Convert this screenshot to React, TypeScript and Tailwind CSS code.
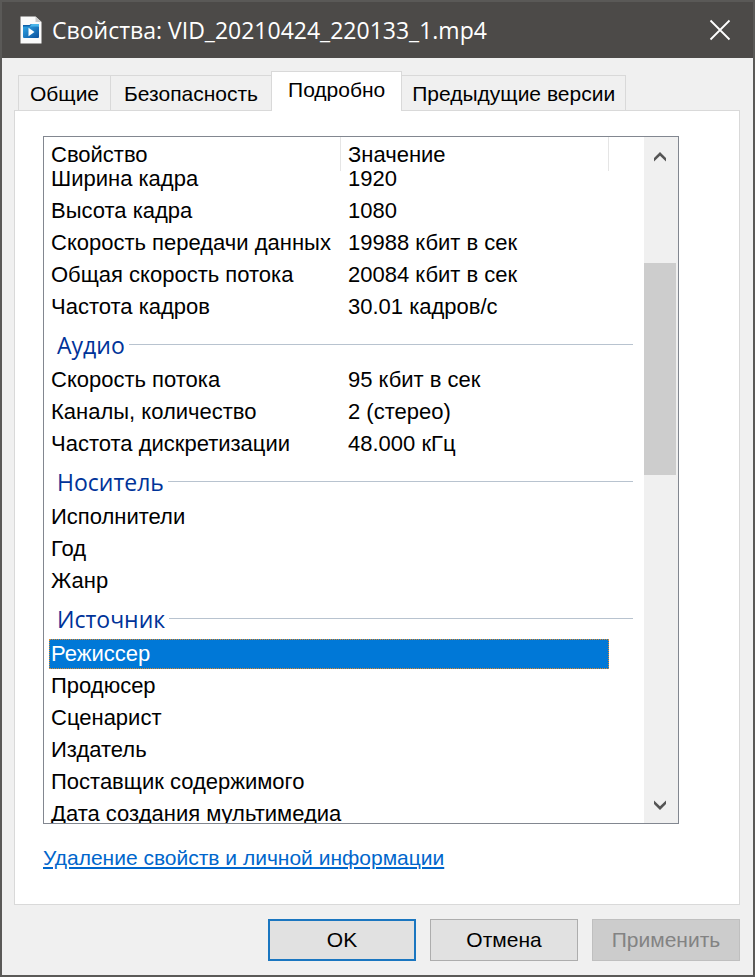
import React from 'react';

interface Row {
  name: string;
  value?: string;
}

interface Group {
  title?: string;
  rows: Row[];
}

const TABS = ['Общие', 'Безопасность', 'Подробно', 'Предыдущие версии'];
const ACTIVE_TAB = 'Подробно';
const SELECTED_ROW = 'Режиссер';

const GROUPS: Group[] = [
  {
    rows: [
      { name: 'Ширина кадра', value: '1920' },
      { name: 'Высота кадра', value: '1080' },
      { name: 'Скорость передачи данных', value: '19988 кбит в сек' },
      { name: 'Общая скорость потока', value: '20084 кбит в сек' },
      { name: 'Частота кадров', value: '30.01 кадров/с' },
    ],
  },
  {
    title: 'Аудио',
    rows: [
      { name: 'Скорость потока', value: '95 кбит в сек' },
      { name: 'Каналы, количество', value: '2 (стерео)' },
      { name: 'Частота дискретизации', value: '48.000 кГц' },
    ],
  },
  {
    title: 'Носитель',
    rows: [{ name: 'Исполнители' }, { name: 'Год' }, { name: 'Жанр' }],
  },
  {
    title: 'Источник',
    rows: [
      { name: 'Режиссер' },
      { name: 'Продюсер' },
      { name: 'Сценарист' },
      { name: 'Издатель' },
      { name: 'Поставщик содержимого' },
      { name: 'Дата создания мультимедиа' },
    ],
  },
];

const FileIcon: React.FC = () => (
  <svg width="22" height="28" viewBox="0 0 22 28" aria-hidden="true">
    <defs>
      <linearGradient id="clip" x1="0" y1="0" x2="1" y2="1">
        <stop offset="0" stopColor="#2fa4e4" />
        <stop offset="1" stopColor="#0b4f9c" />
      </linearGradient>
    </defs>
    <path d="M0.5 0.5H15.5L21.5 6V27.5H0.5Z" fill="#fafafa" />
    <path d="M15.5 0.5V6H21.5Z" fill="#c9c9c9" />
    <path d="M3 9H9.5L11 8H19V12H3Z" fill="#0d5fa8" />
    <path d="M11.5 8H19V11H9.5Z" fill="#49b5ea" />
    <rect x="3" y="10.5" width="16" height="11.5" rx="1" fill="url(#clip)" />
    <path d="M8.5 11.8V20.2L14.5 16Z" fill="#fff" />
  </svg>
);

const TitleBar: React.FC = () => (
  <header className="flex h-14 flex-shrink-0 items-center bg-[#4c4a48] pl-[18px] pr-[21px] text-white">
    <FileIcon />
    <h1 className="ml-[10px] flex-1 truncate font-['Open_Sans','Noto_Sans',sans-serif] text-[23px] leading-8">
      Свойства: VID_20210424_220133_1.mp4
    </h1>
    <button type="button" aria-label="Закрыть" className="flex h-6 w-6 items-center justify-center">
      <svg width="22" height="22" viewBox="0 0 22 22" fill="none" stroke="#fff" strokeWidth="1.8">
        <path d="M1.5 1.5L20.5 20.5M20.5 1.5L1.5 20.5" />
      </svg>
    </button>
  </header>
);

const Tabs: React.FC = () => (
  <div role="tablist" className="flex h-[52px] flex-shrink-0 items-end pl-1">
    {TABS.map((tab, i) =>
      tab === ACTIVE_TAB ? (
        <button
          key={tab}
          type="button"
          role="tab"
          aria-selected="true"
          className="relative -mb-px h-10 border border-b-0 border-[#d9d9d9] bg-white px-4 pb-1"
        >
          {tab}
        </button>
      ) : (
        <button
          key={tab}
          type="button"
          role="tab"
          aria-selected="false"
          className={`h-[35px] border-t border-[#d9d9d9] pt-[2px] ${i === 0 ? 'border-l border-r px-[11px]' : ''} ${
            i === 1 ? 'px-[13px]' : ''
          } ${i === 3 ? 'border-r px-[10px]' : ''}`}
        >
          {tab}
        </button>
      )
    )}
  </div>
);

const PropertyTable: React.FC = () => (
  <table className="w-full table-fixed border-collapse text-left text-[22px]">
    <colgroup>
      <col className="w-1/2" />
      <col />
      <col className="w-6" />
    </colgroup>
    <thead>
      <tr className="h-[26px] align-top">
        <th className="p-0 font-normal">
          <div className="-mb-2 flex h-[34px] items-center border-r border-[#e5e5e5] pl-[2px] pt-[2px]">Свойство</div>
        </th>
        <th className="p-0 font-normal">
          <div className="-mb-2 flex h-[34px] items-center border-r border-[#e5e5e5] pl-[7px] pt-[2px]">Значение</div>
        </th>
        <td />
      </tr>
    </thead>
    {GROUPS.map((group, i) => (
      <tbody key={i}>
        {group.title && (
          <tr>
            <th colSpan={3} className="p-0 font-normal">
              <div className="flex h-[41px] items-center gap-1 pl-2 pt-px">
                <span className="pt-[2px] font-['Open_Sans','Noto_Sans',sans-serif] text-[23px] leading-8 text-[#003399]">
                  {group.title}
                </span>
                <span className="h-px flex-1 bg-[#b8c3cf]" />
              </div>
            </th>
          </tr>
        )}
        {group.rows.map((row) => {
          const selected = row.name === SELECTED_ROW;
          return (
            <tr key={row.name} aria-selected={selected} className="h-8 whitespace-nowrap">
              {selected ? (
                <td colSpan={2} className="p-0">
                  <div className="h-[30px] border border-dotted border-[#e08a2c] bg-[#0078d7] pl-px leading-7 text-white">
                    {row.name}
                  </div>
                </td>
              ) : (
                <>
                  <td className="p-0 pl-[2px]">{row.name}</td>
                  <td className="p-0 pl-[7px]">{row.value}</td>
                </>
              )}
              <td />
            </tr>
          );
        })}
      </tbody>
    ))}
  </table>
);

const ScrollBar: React.FC = () => (
  <div className="flex w-[34px] flex-shrink-0 flex-col bg-[#f0f0f0] pr-[2px]">
    <button type="button" aria-label="Вверх" className="flex h-[38px] items-center justify-center pt-[2px]">
      <svg width="12" height="10" viewBox="0 0 12 10" fill="#555">
        <path d="M6 0L12 6V9.5L6 3.7L0 9.5V6Z" />
      </svg>
    </button>
    <div className="flex-[88]" />
    <div className="flex-[212] bg-[#cdcdcd]" />
    <div className="flex-[310]" />
    <button type="button" aria-label="Вниз" className="flex h-[38px] items-center justify-center pt-[2px]">
      <svg width="12" height="10" viewBox="0 0 12 10" fill="#555">
        <path d="M6 10L12 4V0.5L6 6.3L0 0.5V4Z" />
      </svg>
    </button>
  </div>
);

const Footer: React.FC = () => (
  <div className="flex flex-shrink-0 justify-end gap-[14px] py-[14px]">
    <button type="button" className="h-[42px] w-[148px] border-2 border-[#1a76c0] bg-[#e1e1e1]">
      OK
    </button>
    <button type="button" className="h-[42px] w-[148px] border border-[#adadad] bg-[#e1e1e1]">
      Отмена
    </button>
    <button type="button" disabled className="h-[42px] w-[148px] border border-[#bfbfbf] bg-[#cccccc] text-[#838383]">
      Применить
    </button>
  </div>
);

const App: React.FC = () => {
  return (
    <div className="flex h-screen flex-col border-2 border-[#5a5957] bg-[#f0f0f0] font-['Liberation_Sans',Arial,sans-serif] text-[21px] leading-6 text-black">
      <TitleBar />

      <div className="flex min-h-0 flex-1 flex-col pl-3 pr-[13px]">
        <Tabs />

        {/* Tab page */}
        <div role="tabpanel" className="flex min-h-0 flex-1 flex-col border border-[#d9d9d9] bg-white pl-7 pr-[60px] pt-[25px]">
          <div className="flex min-h-0 flex-1 border border-[#828790]">
            <div className="min-w-0 flex-1 overflow-hidden pl-[5px] pr-[11px]">
              <PropertyTable />
            </div>
            <ScrollBar />
          </div>
          <div className="pb-[34px] pt-[22px]">
            <a href="#" className="text-[#0066cc] underline underline-offset-2">
              Удаление свойств и личной информации
            </a>
          </div>
        </div>

        <Footer />
      </div>
    </div>
  );
};

export default App;
